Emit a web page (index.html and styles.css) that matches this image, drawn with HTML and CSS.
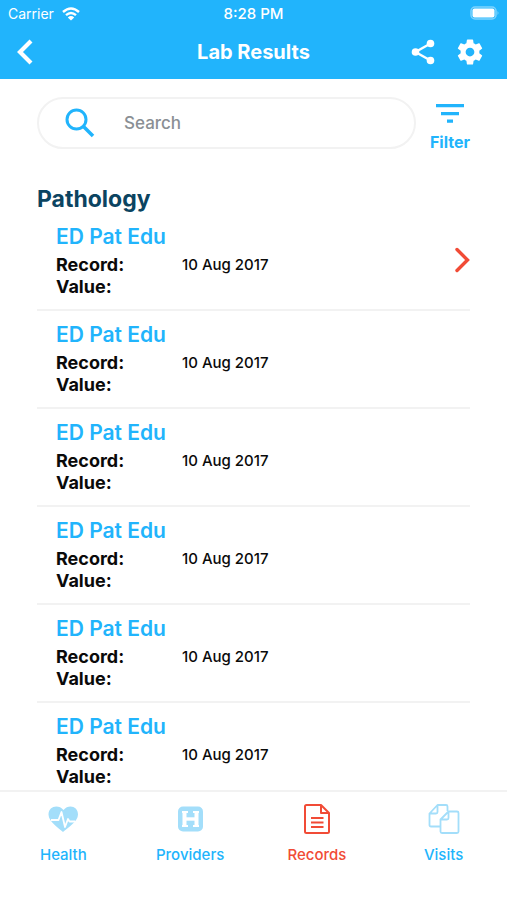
FILE: index.html
```html
<!DOCTYPE html>
<html lang="en">
<head>
<meta charset="utf-8">
<meta name="viewport" content="width=device-width, initial-scale=1">
<title>Lab Results</title>
<link rel="stylesheet" href="styles.css">
</head>
<body>
<header class="header">
  <div class="status">
    <span class="carrier">Carrier
      <svg class="wifi" width="18" height="14" viewBox="0 0 18 14" fill="none" stroke="currentColor" stroke-width="2.4"><path d="M1 5Q9-2 17 5M4 8.200Q9 3.800 14 8.200"/><path d="M9 13.500 5.800 10.400Q9 7.800 12.200 10.400Z" fill="currentColor" stroke="none"/></svg>
    </span>
    <time class="clock">8:28 PM</time>
    <svg class="battery" width="29" height="15" viewBox="0 0 29 15"><rect x="1" y="1" width="25" height="12" rx="4" fill="none" stroke="#7fd3fd" stroke-width="1.500"/><rect x="2.500" y="2.500" width="22" height="9" rx="2" fill="#fff"/><path d="M27.500 5q2 2 0 4z" fill="#7fd3fd"/></svg>
  </div>
  <div class="bar">
    <button class="icon-button back" aria-label="Back"><svg width="18" height="26" viewBox="0 0 18 26" fill="none" stroke="currentColor" stroke-width="4.200"><path d="M15 2 4 13 15 24"/></svg></button>
    <h1 class="title">Lab Results</h1>
    <div class="actions">
      <button class="icon-button" aria-label="Share"><svg width="24" height="26" viewBox="0 0 24 26" fill="currentColor"><path d="M19.500 4.500 4.500 13l15 8.500" fill="none" stroke="currentColor" stroke-width="2.400"/><circle cx="19.500" cy="4.500" r="3.800"/><circle cx="4.500" cy="13" r="3.800"/><circle cx="19.500" cy="21.500" r="3.800"/></svg></button>
      <button class="icon-button" aria-label="Settings"><svg width="30" height="30" viewBox="0 0 24 24" fill="currentColor"><path d="M19.430 12.980c.04-.32.07-.64.07-.98s-.03-.66-.07-.98l2.110-1.650c.19-.15.24-.42.12-.64l-2-3.460c-.12-.22-.39-.3-.61-.22l-2.490 1c-.52-.4-1.080-.73-1.690-.98l-.38-2.650C14.460 2.180 14.250 2 14 2h-4c-.25 0-.46.18-.49.42l-.38 2.650c-.61.25-1.170.59-1.690.98l-2.490-1c-.23-.09-.49 0-.61.22l-2 3.460c-.13.22-.07.49.12.64l2.110 1.650c-.04.32-.07.65-.07.98s.03.66.07.98l-2.110 1.650c-.19.15-.24.42-.12.64l2 3.460c.12.22.39.3.61.22l2.490-1c.52.4 1.080.73 1.690.98l.38 2.650c.03.24.24.42.49.42h4c.25 0 .46-.18.49-.42l.38-2.650c.61-.25 1.170-.59 1.690-.98l2.490 1c.23.09.49 0 .61-.22l2-3.460c.12-.22.07-.49-.12-.64zM12 15.500c-1.930 0-3.500-1.570-3.500-3.500s1.570-3.500 3.500-3.500 3.500 1.570 3.500 3.500-1.570 3.500-3.500 3.500z"/></svg></button>
    </div>
  </div>
</header>

<main class="content">
  <form class="tools" role="search">
    <label class="search">
      <svg width="30" height="30" viewBox="0 0 30 30" fill="none" stroke="currentColor" stroke-width="3"><circle cx="11.500" cy="11.500" r="9.500"/><path d="m18 18 10 10" stroke-width="3.600"/></svg>
      <input class="search-input" type="search" placeholder="Search" aria-label="Search">
    </label>
    <button class="filter" type="button">
      <svg width="28" height="20" viewBox="0 0 28 20" fill="currentColor"><path d="M0 0h28v3.200H0zM5 8h18v3.200H5zM11 15.500h6v3.200h-6z"/></svg>
      Filter
    </button>
  </form>
  <h2 class="section">Pathology</h2>
  <ul class="results">
    <li class="result">
      <div class="detail"><h3 class="name">ED Pat Edu</h3><dl class="facts"><dt>Record:</dt><dd>10 Aug 2017</dd><dt>Value:</dt><dd></dd></dl></div>
      <button class="icon-button open" aria-label="Open result"><svg width="16" height="26" viewBox="0 0 16 26" fill="none" stroke="currentColor" stroke-width="3.400" stroke-linecap="round"><path d="M3 2.500 13.500 13 3 23.500"/></svg></button>
    </li>
    <li class="result">
      <div class="detail"><h3 class="name">ED Pat Edu</h3><dl class="facts"><dt>Record:</dt><dd>10 Aug 2017</dd><dt>Value:</dt><dd></dd></dl></div>
    </li>
    <li class="result">
      <div class="detail"><h3 class="name">ED Pat Edu</h3><dl class="facts"><dt>Record:</dt><dd>10 Aug 2017</dd><dt>Value:</dt><dd></dd></dl></div>
    </li>
    <li class="result">
      <div class="detail"><h3 class="name">ED Pat Edu</h3><dl class="facts"><dt>Record:</dt><dd>10 Aug 2017</dd><dt>Value:</dt><dd></dd></dl></div>
    </li>
    <li class="result">
      <div class="detail"><h3 class="name">ED Pat Edu</h3><dl class="facts"><dt>Record:</dt><dd>10 Aug 2017</dd><dt>Value:</dt><dd></dd></dl></div>
    </li>
    <li class="result">
      <div class="detail"><h3 class="name">ED Pat Edu</h3><dl class="facts"><dt>Record:</dt><dd>10 Aug 2017</dd><dt>Value:</dt><dd></dd></dl></div>
    </li>
  </ul>
</main>

<nav class="tabs">
  <a class="tab" href="#health">
    <svg class="tab-icon" width="32" height="32" viewBox="0 0 32 32"><path d="M16 29C12 25 1.500 19 1.500 11.500 1.500 3 11.500 1 16.500 7 21.500 1 31 3 31 11.500 31 19 20 25 16 29z" fill="#a3defa"/><path d="M4 17h7.500L14.500 9l3.500 15 3-8 1.500 2.500H28" fill="none" stroke="#fff" stroke-width="1.800" stroke-linejoin="round"/></svg>
    Health
  </a>
  <a class="tab" href="#providers">
    <svg class="tab-icon" width="32" height="32" viewBox="0 0 32 32"><rect x="4" y="3.500" width="25" height="25" rx="5" fill="#a3defa"/><path d="M10.500 8v16M22.500 8v16" fill="none" stroke="#fff" stroke-width="4"/><path d="M10 16h13" fill="none" stroke="#fff" stroke-width="3.400"/><path d="M8 9h6M19 9h6M8 23h6M19 23h6" fill="none" stroke="#fff" stroke-width="2"/></svg>
    Providers
  </a>
  <a class="tab current" href="#records" aria-current="page">
    <svg class="tab-icon" width="32" height="32" viewBox="0 0 32 32" fill="none" stroke="currentColor" stroke-width="2" stroke-linejoin="round"><path d="M20 2H5.500q-1.500 0-1.500 1.500v25Q4 30 5.500 30h21q1.500 0 1.500-1.500V10zM20 2v8h8M10 15h12.500M10 19.500h12.500M10 24h12.500"/></svg>
    Records
  </a>
  <a class="tab" href="#visits">
    <svg class="tab-icon" width="32" height="32" viewBox="0 0 32 32" fill="none" stroke="#a3defa" stroke-width="1.800" stroke-linejoin="round"><path d="M12 23.500H3q-1.500 0-1.500-1.500V10.500L9.500 2H18q1.500 0 1.500 1.500V8M9.500 2v7q0 1.500-1.500 1.500H1.500"/><path d="M20.500 8.500h8.500q1.500 0 1.500 1.500v18.500Q30.500 30 29 30H14q-1.500 0-1.500-1.500v-12zM20.500 8.500v6.500q0 1.500-1.500 1.500h-6.500"/></svg>
    Visits
  </a>
</nav>
</body>
</html>
```

FILE: styles.css
```css
:root {
  --blue: #21b4fc;
  --navy: #0b4461;
  --red: #f14b36;
  --line: #f2f2f2;
}

* {
  box-sizing: border-box;
  margin: 0;
  padding: 0;
}

body {
  display: flex;
  flex-direction: column;
  height: 100vh;
  overflow: hidden;
  background: #fff;
  color: #0a0a0a;
  font-family: Inter, sans-serif;
}

svg {
  display: block;
}

button {
  border: 0;
  background: none;
  color: inherit;
  font: inherit;
  cursor: pointer;
}

.icon-button {
  display: flex;
}

.header {
  padding-bottom: 2px;
  background: var(--blue);
  color: #fff;
}

.status,
.bar {
  display: grid;
  grid-template-columns: 1fr auto 1fr;
  align-items: center;
}

.status {
  height: 27px;
  padding: 0 8px;
  font-size: 14px;
}

.carrier {
  display: flex;
  align-items: center;
  gap: 8px;
}

.clock {
  font-size: 15px;
  font-weight: 500;
}

.battery {
  justify-self: end;
}

.bar {
  height: 50px;
  padding: 0 16px;
}

.title {
  font-size: 20px;
  font-weight: 700;
}

.actions {
  display: flex;
  align-items: center;
  justify-self: end;
  gap: 20px;
  padding-right: 6px;
}

.content {
  flex: 1;
  min-height: 0;
  padding: 18px 37px 0;
  overflow: hidden;
}

.tools {
  display: flex;
  align-items: flex-start;
  gap: 14px;
  margin-bottom: 33px;
}

.search {
  display: flex;
  flex: 1;
  align-items: center;
  gap: 29px;
  min-width: 0;
  height: 52px;
  padding: 0 26px;
  border: 2px solid var(--line);
  border-radius: 26px;
  color: var(--blue);
}

.search-input {
  flex: 1;
  min-width: 0;
  border: 0;
  outline: 0;
  background: none;
  color: #0a0a0a;
  font: 500 17px Inter, sans-serif;
}

.search-input::placeholder {
  color: #8a8f94;
  opacity: 1;
}

.filter {
  display: flex;
  flex-direction: column;
  align-items: center;
  gap: 8px;
  padding-top: 7px;
  color: var(--blue);
  font-size: 16px;
  font-weight: 700;
  line-height: 20px;
}

.section {
  color: var(--navy);
  font-size: 23px;
  font-weight: 700;
  line-height: 28px;
}

.results {
  list-style: none;
}

.result {
  display: flex;
  padding: 12px 0 11px 19px;
  border-bottom: 2px solid var(--line);
}

.detail {
  flex: 1;
}

.name {
  margin-bottom: 5px;
  color: var(--blue);
  font-size: 21px;
  font-weight: 600;
  line-height: 24px;
}

.facts {
  display: grid;
  grid-template-columns: 126px 1fr;
  font-size: 18px;
  line-height: 22px;
}

.facts dt {
  font-weight: 700;
}

.facts dd {
  font-size: 15px;
  font-weight: 500;
}

.open {
  align-self: center;
  padding-bottom: 4px;
  color: var(--red);
}

.tabs {
  display: grid;
  grid-template-columns: repeat(4, 1fr);
  padding: 11px 0 35px;
  border-top: 2px solid var(--line);
}

.tab {
  display: flex;
  flex-direction: column;
  align-items: center;
  gap: 10px;
  color: var(--blue);
  font-size: 15px;
  font-weight: 500;
  line-height: 20px;
  text-decoration: none;
}

.current {
  color: var(--red);
}
```
